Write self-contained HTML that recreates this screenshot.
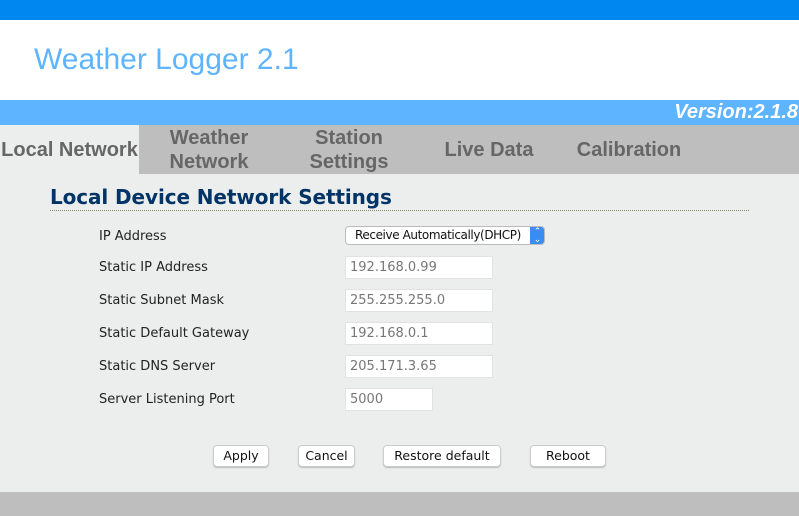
<!DOCTYPE html>
<html><head><style>
*{margin:0;padding:0;box-sizing:border-box}
body{width:799px;height:516px;overflow:hidden;background:#eceeed;font-family:"DejaVu Sans","Liberation Sans",sans-serif;position:relative}
.a{position:absolute;white-space:nowrap}
.top{left:0;top:0;width:799px;height:20px;background:#0088f0}
.hdr{left:0;top:20px;width:799px;height:80px;background:#fff}
.title{left:34px;top:43px;font:30px "Liberation Sans",sans-serif;color:#5eb4ff}
.ver{left:0;top:100px;width:799px;height:25px;background:#5eb4ff;color:#fff;font:italic bold 20px "Liberation Sans",sans-serif;text-align:right;padding-right:1px;line-height:25px}
.tabs{left:0;top:125px;width:799px;height:49px;background:#bebebe}
.tab{position:absolute;top:0;width:140px;height:49px;display:flex;align-items:center;justify-content:center;text-align:center;font:bold 20px/24px "Liberation Sans",sans-serif;color:#666}
.h{left:50px;top:185px;font:bold 20px "DejaVu Sans",sans-serif;color:#003366;letter-spacing:-0.1px}
.line{left:50px;top:210px;width:699px;border-top:1px dotted #886}
.lbl{left:99px;font-size:13px;color:#222}
.inp{left:345px;width:148px;height:23px;background:#fff;border:1px solid #e2e2e2;font-size:13px;color:#777;padding-left:4px;line-height:21px}
.sel{left:345px;top:226px;width:200px;height:19px;background:#fff;border:1px solid #bbb;border-radius:4px;font-size:12px;color:#111;line-height:17px;padding-left:9px;overflow:hidden;letter-spacing:-0.4px}
.arr{position:absolute;right:-1px;top:-1px;width:15px;height:19px;background:#3b8cf0;border-radius:0 4px 4px 0;color:#fff;font-size:9px;text-align:center;line-height:8px;padding-top:2px;letter-spacing:0}
.btn{top:445px;height:22px;background:#fff;border:1px solid #ccc;border-radius:4px;font-size:12.5px;color:#111;text-align:center;line-height:20px;box-shadow:0 1px 1px #bbb}
.foot{left:0;top:492px;width:799px;height:24px;background:#bebebe}
</style></head><body>
<div class="a top"></div>
<div class="a hdr"></div>
<div class="a title">Weather Logger 2.1</div>
<div class="a ver">Version:2.1.8</div>
<div class="a tabs">
<div class="tab" style="left:0;width:139px;background:#eceeed">Local Network</div>
<div class="tab" style="left:139px">Weather<br>Network</div>
<div class="tab" style="left:279px">Station<br>Settings</div>
<div class="tab" style="left:419px">Live Data</div>
<div class="tab" style="left:559px">Calibration</div>
</div>
<div class="a h">Local Device Network Settings</div>
<div class="a line"></div>
<div class="a lbl" style="top:229px">IP Address</div>
<div class="a lbl" style="top:260px">Static IP Address</div>
<div class="a lbl" style="top:293px">Static Subnet Mask</div>
<div class="a lbl" style="top:326px">Static Default Gateway</div>
<div class="a lbl" style="top:359px">Static DNS Server</div>
<div class="a lbl" style="top:392px">Server Listening Port</div>
<div class="a sel">Receive Automatically(DHCP)<div class="arr">&#8963;<br>&#8964;</div></div>
<div class="a inp" style="top:256px">192.168.0.99</div>
<div class="a inp" style="top:289px">255.255.255.0</div>
<div class="a inp" style="top:322px">192.168.0.1</div>
<div class="a inp" style="top:355px">205.171.3.65</div>
<div class="a inp" style="top:388px;width:88px">5000</div>
<div class="a btn" style="left:213px;width:56px">Apply</div>
<div class="a btn" style="left:298px;width:57px">Cancel</div>
<div class="a btn" style="left:383px;width:118px">Restore default</div>
<div class="a btn" style="left:530px;width:76px">Reboot</div>
<div class="a foot"></div>
</body></html>
